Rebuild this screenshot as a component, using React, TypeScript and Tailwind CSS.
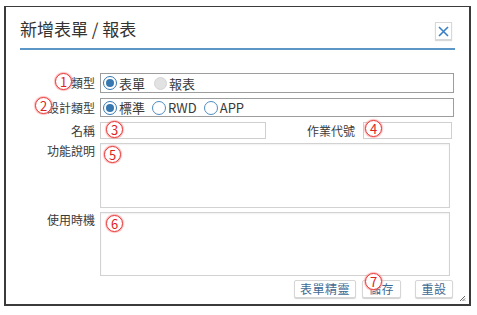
import React from 'react';

const font = { fontFamily: '"Noto Sans CJK TC", "Noto Sans", sans-serif' };

const Badge = ({ n, className }: { n: number; className: string }) => (
  <span
    className={`absolute flex h-[17px] w-[17px] items-center justify-center rounded-full border border-[#e5393a] bg-white text-[13px] leading-none text-[#e01f1f] shadow-[0_0_1px_1px_rgba(255,120,120,0.55)] ${className}`}
  >
    {n}
  </span>
);

const Radio = ({ checked, disabled, label }: { checked?: boolean; disabled?: boolean; label: string }) => (
  <label className="flex items-center gap-[2px]">
    {disabled ? (
      <span className="h-[13px] w-[13px] rounded-full border border-[#d4d4d4] bg-[#e2e2e2]" />
    ) : checked ? (
      <span className="flex h-[14px] w-[14px] items-center justify-center rounded-full border-[1.5px] border-[#3677b0] bg-white">
        <span className="h-[8px] w-[8px] rounded-full bg-[#3677b0]" />
      </span>
    ) : (
      <span className="h-[14px] w-[14px] rounded-full border border-[#4e8cc0] bg-white" />
    )}
    <span className="text-[13px] leading-none text-[#3a3a3a]">{label}</span>
  </label>
);

const Label = ({ children, top }: { children: React.ReactNode; top?: boolean }) => (
  <div className={`w-[94px] shrink-0 pr-[5px] text-right text-[12px] text-[#3a3a3a] ${top ? 'leading-[16px]' : 'leading-none'}`}>
    {children}
  </div>
);

const Button = ({ children, w }: { children: React.ReactNode; w: string }) => (
  <button className={`h-[18px] ${w} rounded-[2px] border border-[#d6d6d6] bg-white text-[12px] leading-none tracking-[0.5px] text-[#3d6a93] shadow-[0_1px_1px_rgba(0,0,0,0.18)]`}>
    {children}
  </button>
);

export default function App() {
  return (
    <div className="h-[315px] w-[477px] bg-white" style={font}>
      <div className="relative ml-[4px] pt-[6px]">
        <div className="relative h-[300px] w-[467px] border-x-2 border-b-2 border-t border-[#3b3b3b] bg-white">
          {/* header */}
          <div className="mx-[14px] flex items-end justify-between border-b-2 border-[#5b96c6] pb-[7px] pt-[10px]">
            <h1 className="text-[17px] leading-[24px] text-[#333]">新增表單 / 報表</h1>
            <button className="mb-[1px] mr-[3px] flex h-[18px] w-[17px] items-center justify-center border border-[#d8d8d8] bg-white shadow-[0_1px_1px_rgba(0,0,0,0.15)]">
              <svg width="11" height="11" viewBox="0 0 11 11">
                <path d="M1 1 L10 10 M10 1 L1 10" stroke="#3a80c2" strokeWidth="1.6" />
              </svg>
            </button>
          </div>

          {/* form */}
          <div className="flex flex-col gap-[4px] pt-[23px]">
            <div className="flex h-[20px] items-center">
              <Label>類型</Label>
              <div className="flex h-[20px] w-[354px] items-center gap-[9px] border border-[#9d9d9d] pl-[2px]">
                <Radio checked label="表單" />
                <Radio disabled label="報表" />
              </div>
            </div>
            <div className="mt-[1px] flex h-[19px] items-center">
              <Label>設計類型</Label>
              <div className="flex h-[19px] w-[354px] items-center gap-[7px] border border-[#9d9d9d] pl-[2px]">
                <Radio checked label="標準" />
                <Radio label="RWD" />
                <Radio label="APP" />
              </div>
            </div>
            <div className="mt-[1px] flex h-[17px] items-center">
              <Label>名稱</Label>
              <input className="h-[17px] w-[166px] border border-[#cfcfcf] outline-none" />
              <div className="w-[97px] pr-[8px] text-right text-[12px] leading-none text-[#3a3a3a]">作業代號</div>
              <input className="h-[17px] w-[89px] border border-[#cfcfcf] outline-none" />
            </div>
            <div className="flex items-start">
              <Label top>功能說明</Label>
              <textarea className="h-[65px] w-[350px] resize-none border border-[#d2d2d2] shadow-[inset_0_1px_2px_rgba(0,0,0,0.06)] outline-none" />
            </div>
            <div className="flex items-start">
              <Label top>使用時機</Label>
              <textarea className="h-[64px] w-[350px] resize-none border border-[#d2d2d2] shadow-[inset_0_1px_2px_rgba(0,0,0,0.06)] outline-none" />
            </div>
            <div className="flex justify-end gap-[6px] pr-[16px]">
              <Button w="w-[62px]">表單精靈</Button>
              <Button w="w-[39px]">儲存</Button>
              <div className="w-[2px]" />
              <Button w="w-[38px]">重設</Button>
            </div>
          </div>

          {/* resize grip */}
          <svg className="absolute bottom-[2px] right-[3px]" width="7" height="7" viewBox="0 0 7 7">
            <path d="M6 1 L1 6 M6 3.5 L3.5 6 M6 5.5 L5.5 6" stroke="#666" strokeWidth="1" />
          </svg>

          <Badge n={1} className="left-[49px] top-[66px]" />
          <Badge n={2} className="left-[29px] top-[90px]" />
          <Badge n={3} className="left-[100px] top-[114px]" />
          <Badge n={4} className="left-[359px] top-[113px]" />
          <Badge n={5} className="left-[98px] top-[139px]" />
          <Badge n={6} className="left-[100px] top-[208px]" />
          <Badge n={7} className="left-[359px] top-[266px]" />
        </div>
      </div>
    </div>
  );
}
